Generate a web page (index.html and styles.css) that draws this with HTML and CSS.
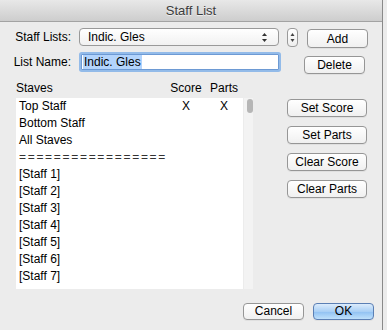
FILE: index.html
```html
<!DOCTYPE html>
<html lang="en">
<head>
    <meta charset="UTF-8">
    <title>Staff List</title>
    <link rel="stylesheet" href="styles.css">
</head>
<body>
    <div class="window">
        <div class="titlebar">Staff List</div>

        <div class="row row-lists">
            <label class="field-label">Staff Lists:</label>
            <div class="popup">
                <span>Indic. Gles</span>
                <svg class="popup-arrows" width="7" height="11" viewBox="0 0 7 11">
                    <path d="M3.5 1 L6 4 L1 4 Z" fill="#333"/>
                    <path d="M3.5 10 L6 7 L1 7 Z" fill="#333"/>
                </svg>
            </div>
            <div class="stepper">
                <svg width="7" height="13" viewBox="0 0 7 13">
                    <path d="M3.5 2 L5.5 5 L1.5 5 Z" fill="#444"/>
                    <path d="M3.5 11 L5.5 8 L1.5 8 Z" fill="#444"/>
                </svg>
            </div>
            <button class="btn btn-side">Add</button>
        </div>

        <div class="row row-name">
            <label class="field-label">List Name:</label>
            <div class="textfield"><span class="selected">Indic. Gles</span></div>
            <button class="btn btn-side btn-delete">Delete</button>
        </div>

        <div class="list-header">
            <span>Staves</span>
            <span class="col">Score</span>
            <span class="col">Parts</span>
        </div>

        <div class="main">
            <div class="list-box">
                <div class="list">
                    <div class="item"><span>Top Staff</span><span class="col">X</span><span class="col">X</span></div>
                    <div class="item"><span>Bottom Staff</span><span class="col"></span><span class="col"></span></div>
                    <div class="item"><span>All Staves</span><span class="col"></span><span class="col"></span></div>
                    <div class="item"><span class="divider">=================</span><span class="col"></span><span class="col"></span></div>
                    <div class="item"><span>[Staff 1]</span><span class="col"></span><span class="col"></span></div>
                    <div class="item"><span>[Staff 2]</span><span class="col"></span><span class="col"></span></div>
                    <div class="item"><span>[Staff 3]</span><span class="col"></span><span class="col"></span></div>
                    <div class="item"><span>[Staff 4]</span><span class="col"></span><span class="col"></span></div>
                    <div class="item"><span>[Staff 5]</span><span class="col"></span><span class="col"></span></div>
                    <div class="item"><span>[Staff 6]</span><span class="col"></span><span class="col"></span></div>
                    <div class="item"><span>[Staff 7]</span><span class="col"></span><span class="col"></span></div>
                </div>
                <div class="scroller"><div class="knob"></div></div>
            </div>

            <div class="side-buttons">
                <button class="btn">Set Score</button>
                <button class="btn">Set Parts</button>
                <button class="btn">Clear Score</button>
                <button class="btn">Clear Parts</button>
            </div>
        </div>

        <div class="footer">
            <button class="btn btn-footer">Cancel</button>
            <button class="btn btn-footer btn-default">OK</button>
        </div>
    </div>
</body>
</html>
```

FILE: styles.css
```css
body {
    margin: 0;
    background-color: #ececec;
    font-family: "Liberation Sans", Arial, sans-serif;
    font-size: 12px;
    color: #000000;
}
.window {
    width: 383px;
    height: 330px;
    background-color: #ececec;
    border-right: 1px solid #8a8a8a;
    box-sizing: border-box;
}
.titlebar {
    height: 22px;
    box-sizing: border-box;
    line-height: 21px;
    text-align: center;
    font-size: 13px;
    color: #3c3c3c;
    background: linear-gradient(#e8e8e8, #cdcdcd);
    border-bottom: 1px solid #a3a3a3;
    text-shadow: 0 1px 0 rgba(255, 255, 255, 0.6);
}
.row {
    display: flex;
    align-items: flex-start;
}
.row-lists {
    margin-top: 6px;
    height: 19px;
}
.row-name {
    margin-top: 5px;
    height: 20px;
}
.field-label {
    width: 71px;
    margin-right: 8px;
    text-align: right;
    line-height: 18px;
}
.row-name .field-label {
    line-height: 20px;
}
.popup {
    width: 200px;
    height: 18px;
    box-sizing: border-box;
    display: flex;
    align-items: center;
    justify-content: space-between;
    padding: 0 8px 0 8px;
    border: 1px solid #999999;
    border-radius: 4px;
    background: linear-gradient(#ffffff, #f1f1f1);
}
.popup-arrows {
    margin-right: 2px;
}
.stepper {
    width: 11px;
    height: 19px;
    box-sizing: border-box;
    margin-left: 8px;
    border: 1px solid #999999;
    border-radius: 4px;
    background: linear-gradient(#ffffff, #eeeeee);
    display: flex;
    align-items: center;
    justify-content: center;
}
.btn {
    font-family: "Liberation Sans", Arial, sans-serif;
    font-size: 12px;
    color: #000000;
    height: 18px;
    padding: 0;
    box-sizing: border-box;
    border: 1px solid #969696;
    border-radius: 4px;
    background: linear-gradient(#ffffff, #f0f0f0);
    box-shadow: 0 1px 0 rgba(0, 0, 0, 0.05);
    line-height: 16px;
}
.btn-side {
    width: 61px;
    height: 19px;
    margin-left: 9px;
    margin-top: 1px;
}
.btn-delete {
    margin-top: 4px;
    margin-left: 25px;
    height: 18px;
}
.textfield {
    width: 198px;
    height: 16px;
    box-sizing: border-box;
    margin: 2px 0 0 2px;
    border: 1px solid #6d9ad4;
    box-shadow: 0 0 0 2px #93bbe9;
    border-radius: 1px;
    background-color: #ffffff;
    padding-left: 1px;
    line-height: 14px;
}
.selected {
    background-color: #b3d4fc;
    padding: 0 1px;
}
.list-header {
    display: grid;
    grid-template-columns: 151px 38px 38px;
    margin: 8px 0 0 16px;
    height: 16px;
    line-height: 16px;
}
.col {
    text-align: center;
}
.main {
    display: flex;
    margin-top: 2px;
    padding-left: 16px;
}
.list-box {
    display: flex;
    width: 237px;
    height: 191px;
    background-color: #ffffff;
}
.list {
    width: 227px;
}
.item {
    display: grid;
    grid-template-columns: 148px 38px 38px;
    padding-left: 3px;
    height: 17px;
    line-height: 16px;
}
.divider {
    letter-spacing: 1.7px;
    color: #333;
}
.scroller {
    width: 10px;
    background-color: #f3f3f3;
    border-left: 1px solid #ececec;
    box-sizing: border-box;
    padding: 1px 0 0 3px;
}
.knob {
    width: 6px;
    height: 14px;
    border-radius: 3px;
    background-color: #b6b6b6;
}
.side-buttons {
    display: flex;
    flex-direction: column;
    gap: 9px;
    margin: 1px 0 0 34px;
}
.side-buttons .btn {
    width: 80px;
}
.footer {
    display: flex;
    justify-content: flex-end;
    gap: 9px;
    margin-top: 14px;
    padding-right: 8px;
}
.btn-footer {
    width: 61px;
    height: 17px;
    line-height: 15px;
}
.btn-default {
    border-color: #5b7fb4;
    background: linear-gradient(#dcecfc, #a9cff5 50%, #8fc0f2 51%, #bfe0fb);
}
```
